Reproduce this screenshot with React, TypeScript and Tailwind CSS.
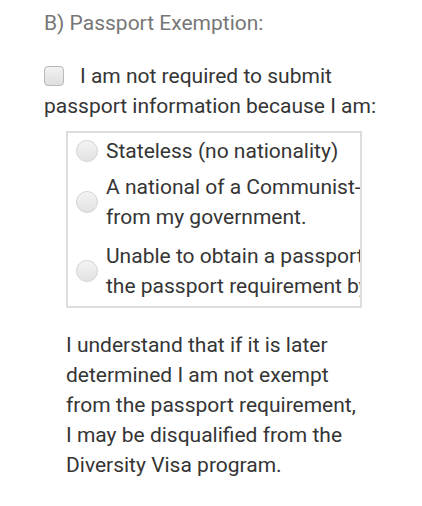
import React from "react";

function Radio() {
  return (
    <span className="shrink-0 w-[22px] h-[22px] rounded-full border border-[#d4d4d4] bg-gradient-to-b from-[#f4f4f4] to-[#e2e2e2]" />
  );
}

export default function App() {
  return (
    <div className="w-[422px] h-[506px] bg-white pl-[44px] pt-[8px] text-[21px] leading-[30px] text-[#353535]" style={{ fontFamily: "Roboto, 'Liberation Sans', sans-serif" }}>
      <div className="text-[#777]">B) Passport Exemption:</div>
      <div className="mt-[23px] pr-[20px]">
        <span className="inline-block align-[-3px] w-[20px] h-[20px] rounded-[4px] border border-[#b9b9b9] bg-gradient-to-b from-[#f2f2f2] to-[#dedede] mr-[16px]" />
        I am not required to submit passport information because I am:
      </div>
      <div className="ml-[22px] mt-[10px] w-[296px] border-2 border-[#dddddd] overflow-hidden pt-[3px] pb-[5px] flex flex-col gap-[6px]">
        <div className="flex items-center gap-[8px] pl-[8px] whitespace-nowrap">
          <Radio />
          <span>Stateless (no nationality)</span>
        </div>
        <div className="flex items-center gap-[8px] pl-[8px] whitespace-nowrap">
          <Radio />
          <span>
            A national of a Communist-controlled country who cannot obtain a passport
            <br />
            from my government.
          </span>
        </div>
        <div className="flex items-center gap-[8px] pl-[8px] whitespace-nowrap mt-[3px]">
          <Radio />
          <span>
            Unable to obtain a passport due to a waiver of
            <br />
            the passport requirement by the Secretary of Homeland Security
          </span>
        </div>
      </div>
      <p className="ml-[22px] mt-[22px] w-[296px]">
        I understand that if it is later determined I am not exempt from the passport requirement, I may be disqualified from the Diversity Visa program.
      </p>
    </div>
  );
}
